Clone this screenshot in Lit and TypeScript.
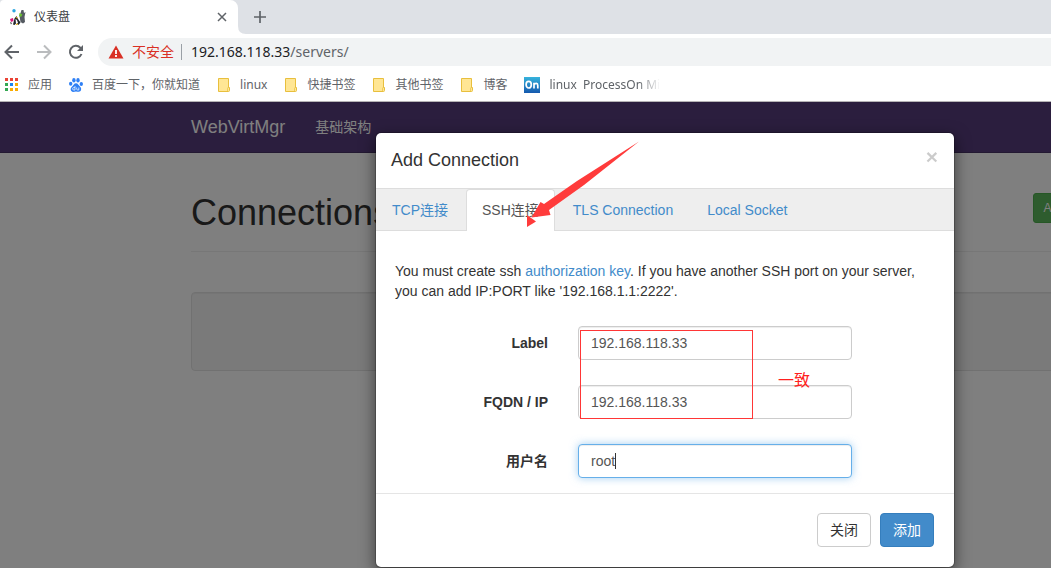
import { LitElement, html, css, svg } from "lit";
import { customElement, state } from "lit/decorators.js";

const folderIcon = html`<svg width="14" height="14" viewBox="-1 0 14 14" aria-hidden="true">
  <path d="M.5 .5h10v9h1v3q0 1-1 1H.5z" fill="#ffe694" stroke="#e8bf3d"/>
  <path d="M9.500 13v-2.500q0-1 1-1" fill="none" stroke="#e8bf3d" stroke-width=".7"/>
</svg>`;

const appsIcon = html`<svg width="14" height="14" viewBox="0 0 14 14" aria-hidden="true">
  <path d="M0 0h3v3H0zM5 0h3v3H5zM10 0h3v3h-3z" fill="#ea4335"/>
  <path d="M0 5h3v3H0z" fill="#34a853"/><path d="M5 5h3v3H5z" fill="#1a84ee"/>
  <path d="M10 5h3v3h-3zM5 10h3v3H5zM10 10h3v3h-3z" fill="#f9ab00"/>
  <path d="M0 10h3v3H0z" fill="#34a853"/>
</svg>`;

const pawIcon = html`<svg width="14" height="14" viewBox="0 0 14 14" aria-hidden="true">
  <g fill="#2f80f5"><ellipse cx="1.700" cy="5.800" rx="1.700" ry="2"/><ellipse cx="4.900" cy="2.300" rx="1.700" ry="2.200"/>
  <ellipse cx="9" cy="2.300" rx="1.700" ry="2.200"/><ellipse cx="12.300" cy="6" rx="1.700" ry="2"/>
  <path d="M7 5.300c2 0 2.500 2 4.200 3.500 1.800 1.800.9 5-1.400 5-1 0-1.700-.3-2.800-.3s-1.800.4-2.900.4C1.700 13.900.8 10.900 2.700 9.100 4.500 7.500 5 5.300 7 5.300z"/></g>
  <path d="M6 8v4H4.800a1.100 1.100 0 0 1 0-2.400H6M7.700 9.500V11q0 1 1 1h1.100V9.500" fill="none" stroke="#fff" stroke-width=".7"/>
</svg>`;

const onIcon = html`<svg width="16" height="16" viewBox="0 0 16 16" aria-hidden="true">
  <defs><linearGradient id="on" x2="0" y2="1"><stop stop-color="#36b3dc"/><stop offset="1" stop-color="#1559ae"/></linearGradient></defs>
  <rect width="16" height="16" fill="url(#on)"/>
  <ellipse cx="4.700" cy="7.700" rx="2.600" ry="3.300" fill="none" stroke="#fff" stroke-width="1.700"/>
  <path d="M10 11.500V5.700M10 8q.8-1.700 2.300-1.600t1.500 2v3.100" fill="none" stroke="#fff" stroke-width="1.700"/>
</svg>`;

const siteIcon = html`<svg width="17" height="17" viewBox="0 0 17 17" aria-hidden="true">
  <path d="M12.500 1h2l.5 3 1.500-1-1 5 .5 5-2 1.500-2.500-1.500-1-6z" fill="#555b62"/>
  <path d="M4 15.500l1.500-6L7.500 7l1.500 3 2.500 3.500-2 2.500-2-2-2 2z" fill="#20262d"/>
  <path d="M6.500 10l1.500 1 1 3-2 .5z" fill="#fff"/>
  <circle cx="5" cy="1.800" r="1.700" fill="#2ba6e0"/><path d="M10.500 4l3 1.500-1.500 2.500-2-1z" fill="#6abf33"/>
  <path d="M1 10l3-1 .5 3-2.500 1z" fill="#d81b7a"/><path d="M1 13l2 1-1 1.500z" fill="#333"/>
  <path d="M7 8.500l1.500.5" stroke="#f0b000"/><path d="M7 15.500l2-.5" stroke="#f0b000"/>
</svg>`;

interface Bookmark { icon: unknown; text: string; faded?: boolean; }

const bookmarks: Bookmark[] = [
  { icon: appsIcon, text: "应用" },
  { icon: pawIcon, text: "百度一下，你就知道" },
  { icon: folderIcon, text: "linux" },
  { icon: folderIcon, text: "快捷书签" },
  { icon: folderIcon, text: "其他书签" },
  { icon: folderIcon, text: "博客" },
  { icon: onIcon, text: "linux\u00a0 ProcessOn Mi", faded: true },
];

@customElement("browser-chrome")
class BrowserChrome extends LitElement {
  static styles = css`
    :host { display: block; background: #fff; color: #5f6368; border-bottom: 1px solid #b6b4b6;
      font: 12px/16px "Noto Sans", "Noto Sans CJK SC", sans-serif; }
    button { border: 0; padding: 0; background: none; color: inherit; display: flex; }
    svg { display: block; flex: none; }
    .strip { display: flex; height: 34px; background: #dee1e6; }
    .tab { display: flex; align-items: center; box-sizing: border-box; width: 238px; padding: 0 10px 0 9px;
      background: #fff; border-radius: 4px 8px 0 0; color: #3c4043; }
    .title { flex: 1; margin-left: 8px; }
    .foot { align-self: flex-end; }
    .plus { align-self: center; margin-left: 8px; color: #5f6368; }
    .toolbar { display: flex; align-items: center; gap: 16px; padding: 4px 0 0 4px; }
    .address { flex: 1; display: flex; align-items: center; height: 28px; margin-left: -2px; padding-left: 10px;
      border-radius: 14px 0 0 14px; background: #f1f3f4; font-size: 14px; line-height: 20px; }
    .unsafe { margin-left: 8px; padding-right: 7px; color: #d93025; }
    .url { padding-left: 9px; color: #5f6368; border-left: 1px solid #9aa0a6; line-height: 16px; }
    .host { color: #202124; }
    .marks { display: flex; align-items: center; gap: 17px; height: 33px; padding: 2px 0 0 5px; }
    .mark { display: flex; align-items: center; gap: 9px; color: #5f6368; text-decoration: none; white-space: nowrap; }
    .faded { -webkit-mask-image: linear-gradient(to right, #000 80%, transparent); mask-image: linear-gradient(to right, #000 80%, transparent); }
  `;
  render() {
    return html`
      <div class="strip">
        <div class="tab">${siteIcon}<span class="title">仪表盘</span>
          <button aria-label="Close tab"><svg width="12" height="12" viewBox="0 0 12 12"><path d="M2 2l8 8M10 2l-8 8" stroke="#5f6368" stroke-width="1.500"/></svg></button>
        </div>
        <svg class="foot" width="8" height="8" viewBox="0 0 8 8"><path d="M0 0q0 8 8 8H0z" fill="#fff"/></svg>
        <button class="plus" aria-label="New tab"><svg width="12" height="12" viewBox="0 0 12 12"><path d="M6 0v12M0 6h12" stroke="#5f6368" stroke-width="1.700"/></svg></button>
      </div>
      <div class="toolbar">
        <button aria-label="Back"><svg width="16" height="16" viewBox="0 0 16 16"><path d="M15 8H2M8 1.500L1.500 8 8 14.500" fill="none" stroke="#5f6368" stroke-width="2"/></svg></button>
        <button aria-label="Forward"><svg width="16" height="16" viewBox="0 0 16 16"><path d="M1 8h13M8 1.500L14.500 8 8 14.500" fill="none" stroke="#babcbe" stroke-width="2"/></svg></button>
        <button aria-label="Reload"><svg width="16" height="16" viewBox="0 0 16 16"><path d="M13.500 10A6 6 0 1 1 12.300 3.700L14 5.500" fill="none" stroke="#5f6368" stroke-width="2"/><path d="M15 1v6H9z" fill="#5f6368"/></svg></button>
        <div class="address">
          <svg width="16" height="14" viewBox="0 0 16 14"><path d="M8 .5L15.500 13.500H.5z" fill="#d93025"/><path d="M8 5v4M8 10v2" stroke="#fff" stroke-width="1.800"/></svg>
          <span class="unsafe">不安全</span>
          <span class="url"><span class="host">192.168.118.33</span>/servers/</span>
        </div>
      </div>
      <nav class="marks">
        ${bookmarks.map((b) => html`<a class="mark" href="#">${b.icon}<span class=${b.faded ? "faded" : ""}>${b.text}</span></a>`)}
      </nav>`;
  }
}

@customElement("connection-dialog")
class ConnectionDialog extends LitElement {
  @state() private active = 1;

  static styles = css`
    :host { display: block; position: relative; background: #fff; background-clip: padding-box; border: 1px solid rgba(0, 0, 0, 0.2);
      border-radius: 6px; box-shadow: 0 5px 15px rgba(0, 0, 0, 0.5); color: #333;
      font: 14px/20px "Liberation Sans", "Noto Sans CJK SC", sans-serif; }
    header { display: flex; justify-content: space-between; align-items: flex-start; padding: 15px 16px 15px 15px; }
    h4 { margin: 0; font-size: 18px; line-height: 25px; font-weight: 500; }
    button { font: inherit; }
    a { color: #428bca; text-decoration: none; }
    .close { padding: 0; border: 0; background: none; font-size: 21px; line-height: 17px; font-weight: 700; color: #000; opacity: 0.2; }
    .tabs { display: flex; gap: 2px; margin: 0; padding: 0; list-style: none; background: #eee; border: solid #ddd; border-width: 1px 0; }
    .tab { display: block; padding: 10px 15px; border: 1px solid transparent; border-bottom: 0; border-radius: 4px 4px 0 0; }
    .tab.on { color: #555; background: #fff; border-color: #ddd; margin-bottom: -1px; padding-bottom: 11px; }
    form { display: grid; gap: 25px; padding: 30px 20px 15px 19px; }
    p { margin: 0; }
    .row { display: grid; grid-template-columns: 153px 1fr 52px; gap: 30px; align-items: center; }
    label { text-align: right; font-weight: 700; }
    input { box-sizing: border-box; min-width: 0; width: 100%; height: 34px; padding: 6px 12px; border: 1px solid #ccc; border-radius: 4px;
      background: #fff; color: #555; font: inherit; box-shadow: inset 0 1px 1px rgba(0, 0, 0, 0.075); outline: 0; }
    .focus { border-color: #66afe9; box-shadow: inset 0 1px 1px rgba(0, 0, 0, 0.075), 0 0 8px rgba(102, 175, 233, 0.6); }
    footer { display: flex; justify-content: flex-end; gap: 9px; padding: 19px 20px 20px; border-top: 1px solid #e5e5e5; }
    .btn { padding: 6px 12px; border: 1px solid #ccc; border-radius: 4px; background: #fff; color: #333; }
    .primary { background: #428bca; border-color: #357ebd; color: #fff; }
    .notes { position: absolute; left: 0; top: 0; pointer-events: none; }
    .note { font: 16px "Noto Sans CJK SC", sans-serif; fill: #ff2020; }
  `;
  private field(id: string, label: string, value: string, focus = false) {
    return html`<div class="row"><label for=${id}>${label}</label><input id=${id} class=${focus ? "focus" : ""} .value=${value}></div>`;
  }
  render() {
    const tabs = ["TCP连接", "SSH连接", "TLS Connection", "Local Socket"];
    return html`
      <header><h4>Add Connection</h4><button class="close" aria-label="Close">×</button></header>
      <ul class="tabs">${tabs.map((t, i) => html`<li><a href="#" class="tab ${i === this.active ? "on" : ""}" @click=${() => (this.active = i)}>${t}</a></li>`)}</ul>
      <form>
        <p>You must create ssh <a href="#">authorization key</a>. If you have another SSH port on your server, you can add IP:PORT like '192.168.1.1:2222'.</p>
        ${this.field("name", "Label", "192.168.118.33")}
        ${this.field("host", "FQDN / IP", "192.168.118.33")}
        ${this.field("user", "用户名", "root", true)}
      </form>
      <footer><button class="btn">关闭</button><button class="btn primary">添加</button></footer>
      <svg class="notes" width="578" height="434" viewBox="0 0 578 434">${svg`
        <path d="M263 8.500L201 48 168 71 164.500 69 155.500 84.500 174.500 82 173 77 208 52z" fill="#ff3b3b"/>
        <path d="M151 82l9 6.500-9 5.500z" fill="#ff3b3b"/>
        <rect x="204.500" y="197.500" width="172" height="88" fill="none" stroke="#ff3636"/>
        <text class="note" x="402" y="253">一致</text>
        <path d="M239.500 320v16" stroke="#333"/>`}
      </svg>`;
  }
}

@customElement("app-root")
class AppRoot extends LitElement {
  static styles = css`
    :host { display: flex; flex-direction: column; height: 100vh; overflow: hidden;
      font: 14px/20px "Liberation Sans", "Noto Sans CJK SC", sans-serif; color: #333; }
    .page { position: relative; flex: 1; overflow: hidden; background: #fff; }
    .navbar { display: flex; align-items: center; gap: 30px; height: 50px; padding-left: 191px; background: #563d7c; border-bottom: 1px solid #463265; }
    .navbar a { color: #fff; text-decoration: none; }
    .navbar .brand { font-size: 18px; }
    main { margin-right: -89px; padding: 40px 0 0 191px; }
    .head { display: flex; justify-content: space-between; align-items: flex-start; padding-bottom: 18px; border-bottom: 1px solid #eee; }
    h1 { margin: 0; font-size: 36px; line-height: 40px; font-weight: 500; }
    .add { padding: 5px 10px; border: 1px solid #4cae4c; border-radius: 3px; background: #5cb85c; color: #fff; font: 12px/18px "Liberation Sans", sans-serif; }
    .well { height: 77px; margin-top: 40px; border: 1px solid #e3e3e3; border-radius: 4px; background: #f5f5f5; box-shadow: inset 0 1px 1px rgba(0, 0, 0, 0.05); }
    .backdrop { position: absolute; inset: 0; padding: 30px 96px 0 375px; background: rgba(0, 0, 0, 0.5); }
  `;
  render() {
    return html`
      <browser-chrome></browser-chrome>
      <div class="page">
        <nav class="navbar"><a class="brand" href="#">WebVirtMgr</a><a href="#">基础架构</a></nav>
        <main>
          <div class="head"><h1>Connections</h1><button class="add">Add Connection</button></div>
          <div class="well"></div>
        </main>
        <div class="backdrop"><connection-dialog></connection-dialog></div>
      </div>`;
  }
}
